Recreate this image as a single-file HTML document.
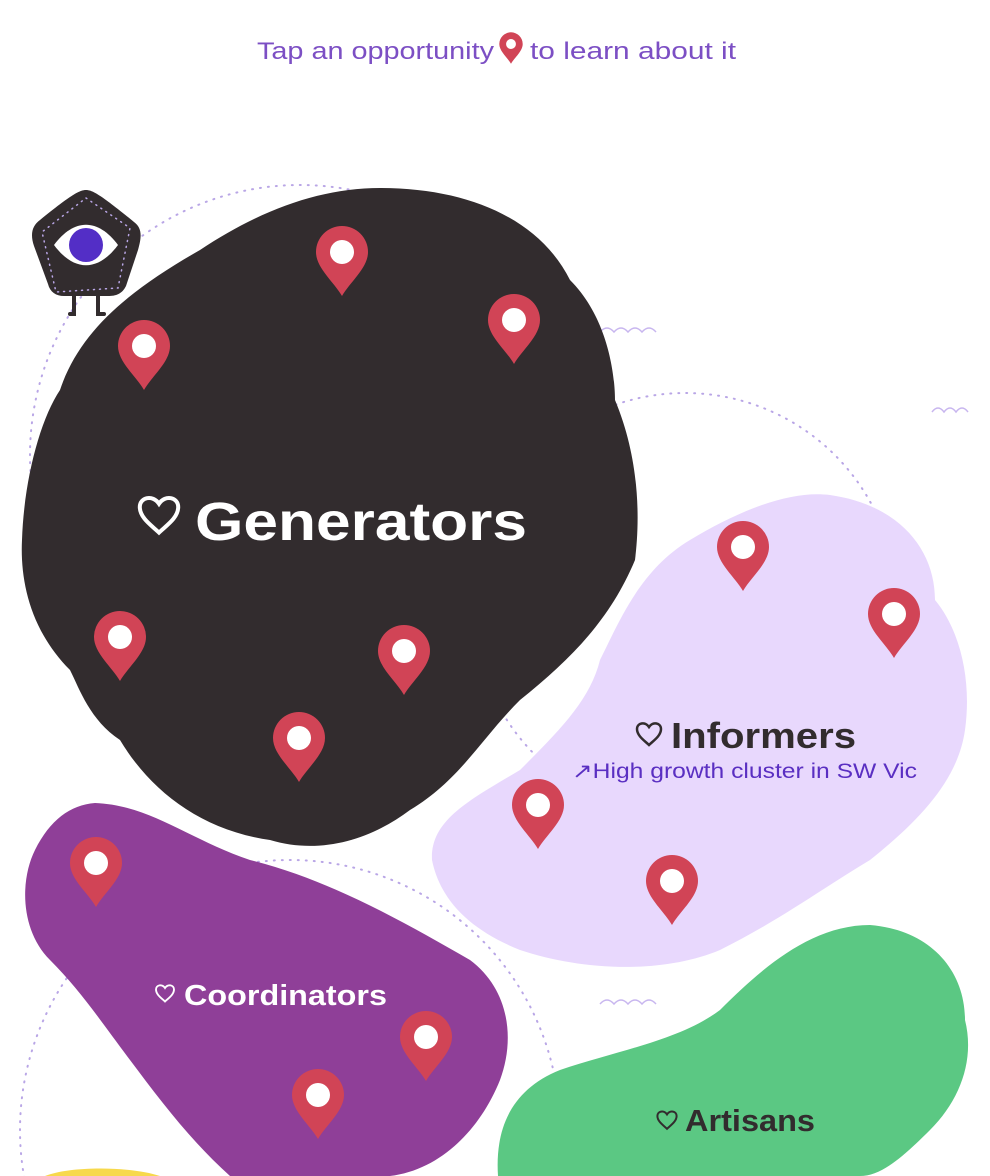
<!DOCTYPE html>
<html><head><style>
html,body{margin:0;padding:0;background:#fff;}
body{width:990px;height:1176px;overflow:hidden;position:relative;font-family:"Liberation Sans",sans-serif;}
</style></head><body>
<svg width="990" height="1176" style="position:absolute;left:0;top:0">
<defs>
<g id="pin"><path d="M0,44 C-8,30 -26,16 -26,0 A26,26 0 1 1 26,0 C26,16 8,30 0,44Z" fill="#d14456"/><circle r="12" fill="#fff"/></g>
<path id="heart" d="M0,6 C-4,2 -12,-3 -12,-10 C-12,-16 -4,-18 0,-12 C4,-18 12,-16 12,-10 C12,-3 4,2 0,6Z" fill="none" stroke-width="2.5"/>
</defs>
<text x="257" y="59" fill="#7c4fc4" font-size="24" textLength="237" lengthAdjust="spacingAndGlyphs">Tap an opportunity</text>
<g transform="translate(511,44) scale(0.45)"><path d="M0,44 C-8,30 -26,16 -26,0 A26,26 0 1 1 26,0 C26,16 8,30 0,44Z" fill="#d14456"/><circle r="11" fill="#fff"/></g>
<text x="530" y="59" fill="#7c4fc4" font-size="24" textLength="206" lengthAdjust="spacingAndGlyphs">to learn about it</text>
<g fill="none" stroke="#b9a6e6" stroke-width="2" stroke-dasharray="1 7" stroke-linecap="round">
<circle cx="300" cy="455" r="270"/>
<circle cx="685" cy="605" r="212"/>
<circle cx="290" cy="1130" r="270"/>
</g>
<g fill="none" stroke="#c8b6ef" stroke-width="1.5">
<path d="M600,332 q7,-8 14,0 q7,-8 14,0 q7,-8 14,0 q7,-8 14,0"/>
<path d="M932,412 q6,-8 12,0 q6,-8 12,0 q6,-8 12,0"/>
<path d="M600,1004 q7,-8 14,0 q7,-8 14,0 q7,-8 14,0 q7,-8 14,0"/>
</g>
<path fill="#f7d94c" d="M45,1176 C70,1166 130,1166 160,1176Z"/>
<path fill="#322c2e" d="M380,188 C470,188 540,220 570,280 C610,320 615,380 615,400 C640,460 640,520 635,560 C610,620 570,660 520,700 C480,740 460,780 410,810 C370,840 320,855 270,840 C200,830 150,790 120,740 C90,720 80,690 70,670 C30,630 20,580 22,540 C24,480 40,420 60,390 C80,330 130,290 200,250 C260,210 320,188 380,188Z"/>
<path fill="#e8d8fd" d="M830,495 C900,505 935,550 935,600 C960,630 972,680 965,730 C958,780 920,820 870,860 C820,890 780,920 720,950 C660,975 580,970 520,950 C470,930 440,900 432,860 C430,820 470,800 520,770 C560,730 590,700 600,660 C620,620 640,570 690,540 C740,510 790,490 830,495Z"/>
<path fill="#8f3f98" d="M95,803 C150,805 190,840 250,860 C330,880 400,920 470,960 C510,990 515,1040 500,1080 C480,1130 440,1170 390,1176 L230,1176 C190,1140 160,1100 130,1060 C100,1020 80,990 50,960 C20,930 20,880 35,850 C50,820 70,805 95,803Z"/>
<path fill="#5bc883" d="M870,925 C930,930 965,970 965,1020 C975,1060 960,1100 930,1130 C900,1160 880,1176 860,1176 L498,1176 C495,1130 510,1090 560,1070 C620,1050 680,1040 720,1010 C760,970 810,925 870,925Z"/>
<g>
<use href="#pin" x="342" y="252"/><use href="#pin" x="514" y="320"/><use href="#pin" x="144" y="346"/>
<use href="#pin" x="120" y="637"/><use href="#pin" x="404" y="651"/><use href="#pin" x="299" y="738"/>
<use href="#pin" x="743" y="547"/><use href="#pin" x="894" y="614"/><use href="#pin" x="538" y="805"/>
<use href="#pin" x="672" y="881"/><use href="#pin" x="96" y="863"/><use href="#pin" x="426" y="1037"/>
<use href="#pin" x="318" y="1095"/>
</g>
<path fill="#322c2e" d="M86,190 C92,190 100,194 134,222 C142,228 142,236 138,250 L126,286 C122,294 116,296 108,296 L64,296 C56,296 50,292 48,284 L34,246 C30,234 32,226 40,220 C72,194 80,190 86,190Z"/>
<path fill="none" stroke="#322c2e" stroke-width="4" stroke-linecap="round" d="M74,296 V314 H70 M98,296 V314 H104"/>
<path fill="none" stroke="#b9a6e6" stroke-width="1.5" stroke-dasharray="1 5" stroke-linecap="round" d="M86,198 L130,228 L118,288 L56,292 L42,232Z"/>
<path fill="#fff" d="M54,245 C74,218 98,218 118,245 C98,272 74,272 54,245Z"/>
<circle cx="86" cy="245" r="17" fill="#532ec6"/>
<use href="#heart" transform="translate(159,523) scale(1.6)" stroke="#fff"/>
<text x="195" y="540" fill="#fff" font-size="54" font-weight="bold" textLength="332" lengthAdjust="spacingAndGlyphs">Generators</text>
<use href="#heart" transform="translate(649,739) scale(1.0)" stroke="#322c2e"/>
<text x="671" y="748" fill="#322c2e" font-size="36" font-weight="bold" textLength="185" lengthAdjust="spacingAndGlyphs">Informers</text>
<text x="572" y="778" fill="#5a2fc2" font-size="21" textLength="345" lengthAdjust="spacingAndGlyphs">↗High growth cluster in SW Vic</text>
<use href="#heart" transform="translate(165,997) scale(0.75)" stroke="#fff"/>
<text x="184" y="1005" fill="#fff" font-size="29" font-weight="bold" textLength="203" lengthAdjust="spacingAndGlyphs">Coordinators</text>
<use href="#heart" transform="translate(667,1124) scale(0.8)" stroke="#322c2e"/>
<text x="685" y="1131" fill="#322c2e" font-size="31" font-weight="bold" textLength="130" lengthAdjust="spacingAndGlyphs">Artisans</text>
</svg>
</body></html>
